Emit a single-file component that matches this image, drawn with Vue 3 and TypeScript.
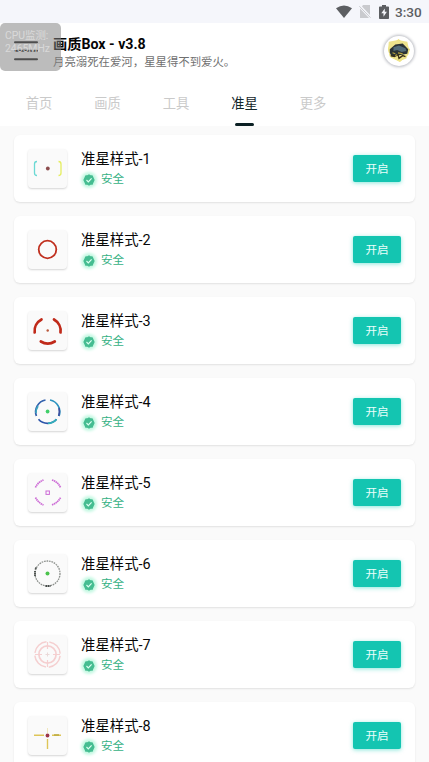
<script setup lang="ts">
import { ref } from 'vue'

const tabs = ['首页', '画质', '工具', '准星', '更多']
const active = ref(3)
const styles = [1, 2, 3, 4, 5, 6, 7, 8]
</script>

<template>
  <div class="screen">
    <div class="status">
      <svg class="wifi" viewBox="0 0 16 13"><path d="M0 3.2Q8-2.4 16 3.2L8 13Z" fill="#5c5e62" /></svg>
      <svg class="sim" viewBox="0 0 12 13">
        <path d="M4 0h7v10L3 1.500zM1 3.500 10 13H1z" fill="#c9cace" />
        <path d="M.3 1.2 11.5 12.7" stroke="#c9cace" stroke-width="1" />
      </svg>
      <svg class="battery" viewBox="0 0 10 14">
        <path d="M3 0h4v1.5h2.2q.8 0 .8.8v10.9q0 .8-.8.8H.8q-.8 0-.8-.8V2.300q0-.8.8-.8H3z" fill="#5c5e62" />
        <path d="M5.800 3.500 2.300 8.300h2.200v3.500l3.400-5H5.800z" fill="#f5f6fb" />
      </svg>
      <span class="clock">3:30</span>
    </div>

    <header class="header">
      <svg class="menu" viewBox="0 0 24 20"><path d="M1 1.300h22M1 9.800h22M1 18.300h22" stroke="#161616" stroke-width="2" stroke-linecap="round" /></svg>
      <div class="heading">
        <h1>画质Box - v3.8</h1>
        <p>月亮溺死在爱河，星星得不到爱火。</p>
      </div>
      <div class="avatar">
        <svg viewBox="0 0 26 26">
          <path d="M12.500 0 25 11l-2 6-9 8-11-6-2-9z" fill="#eee06f" />
          <path d="m2 3 10-2 10 2 2 9-3 9-8 3-9-4-3-8z" fill="#eee48c" />
          <path d="M3 11 9 6l8-1 6 6-1 5-6 1-4 1-7 1-2-4z" fill="#2b3335" />
          <path d="M7 9l6-2 7 3 1 3-5 1-5-2-4 1z" fill="#526c79" />
          <path d="M4 18l4 1 4-2 1 4 4-3 3 1" fill="none" stroke="#3a3018" stroke-width="1.500" />
          <path d="M6 15l3 1M12 15l5 1M9 18l2-1" fill="none" stroke="#bda83c" stroke-width="1.200" />
        </svg>
      </div>
      <div class="monitor">CPU监测:<br />2465MHz</div>
    </header>

    <nav class="tabs">
      <button v-for="(tab, i) in tabs" :key="tab" :class="{ active: active === i }" @click="active = i">{{ tab }}</button>
    </nav>

    <main class="list">
      <article v-for="n in styles" :key="n" class="card">
        <svg class="thumb" viewBox="0 0 39 39" fill="none">
          <g v-if="n === 1" stroke-width="1.300">
            <path d="M9 12.500q-2.500 0-2.500 2.500v9q0 2.500 2.500 2.500" stroke="#6bd9d4" />
            <path d="M30.500 12.500q2.500 0 2.500 2.500v9q0 2.500-2.500 2.500" stroke="#e5ee60" />
            <circle cx="19.800" cy="19.500" r="1.900" fill="#8c4c4d" />
          </g>
          <circle v-else-if="n === 2" cx="19.500" cy="19.500" r="8.800" stroke="#c0301f" stroke-width="1.800" />
          <g v-else-if="n === 3" stroke="#c02a1a" stroke-width="2.700" stroke-linecap="round">
            <path d="M6.700 21.500A13 13 0 0 1 13.500 8.500" />
            <path d="M26 8.500a13 13 0 0 1 6.500 13" />
            <path d="M12.800 30.500a13 13 0 0 0 14 0" />
            <circle cx="19.700" cy="19.500" r="1.200" fill="#ba593d" stroke="none" />
          </g>
          <g v-else-if="n === 4" stroke-width="1.700">
            <path d="M8.400 24A12 12 0 0 1 17.500 8" stroke="#3462ad" />
            <path d="M8 21a12 12 0 0 1 2-7" stroke="#3ba4bf" />
            <path d="M22 8a12 12 0 0 1 9 16" stroke="#2c93c0" />
            <path d="M31 16q1 4-.3 8" stroke="#3d51a0" />
            <path d="M10.500 27.300a12 12 0 0 0 18 0" stroke="#2d55aa" />
            <path d="M20 31.300q5-.3 8.500-4" stroke="#32afba" />
            <circle cx="19.600" cy="19.500" r="1.900" fill="#40cf69" />
          </g>
          <g v-else-if="n === 5" stroke="#cc6bd5" stroke-width="1.700">
            <g stroke-dasharray="1.500 .5">
              <path d="M7.500 14.500q2-5 8-7.500M24 7q6 2 8.500 7.500M7.500 24.500q2.500 5 8 7.500M24 32q6-2.500 8.500-7.500" />
            </g>
            <rect x="18" y="18" width="3.400" height="3.400" stroke-width="1" />
          </g>
          <g v-else-if="n === 6">
            <circle cx="19.500" cy="19.500" r="12.500" stroke="#8d918d" stroke-width="1.300" stroke-dasharray="1.700 .8" />
            <path d="M7 17v5M8 13.500l-.7 2M17.500 32h5" stroke="#454a48" stroke-width="1.800" stroke-dasharray="1.500 .5" />
            <circle cx="19.500" cy="19.500" r="2" fill="#4bc34c" />
          </g>
          <g v-else-if="n === 7" stroke="#f5cfd0">
            <circle cx="19.500" cy="19.500" r="12.700" stroke-width="1.500" stroke-dasharray="17 2.950" stroke-dashoffset="-1.500" />
            <circle cx="19.500" cy="19.500" r="8.600" stroke-width="1.700" />
            <path d="M19.500 7v7M19.500 25v7M7 19.500h7M25 19.500h7" stroke-width="1.200" />
            <path d="M17.500 19.500h4M19.500 17.500v4" stroke="#ead9d8" />
          </g>
          <g v-else stroke="#dec558" stroke-width="1.400">
            <path d="M6 19.300h10M24 19.300h9M19.500 23v10" />
            <path d="M19.500 12v5" stroke="#efe6bd" stroke-width="1" />
            <path d="M26 19h5" stroke="#bba83e" />
            <circle cx="19.500" cy="19.500" r="1.900" fill="#9b374a" stroke="none" />
          </g>
        </svg>
        <div class="info">
          <h2>准星样式-{{ n }}</h2>
          <div class="safe">
            <svg viewBox="0 0 12 12">
              <path d="m6 .3 1.700 1 2-.1.6 1.900L11.700 6l-1.400 2.900-.6 1.900-2-.1-1.700 1-1.700-1-2 .1-.6-1.900L.3 6l1.400-2.900.6-1.900 2 .1z" fill="#45bd91" />
              <path d="m3.500 6 1.800 1.800 3.300-3.500" fill="none" stroke="#d9fff0" stroke-width="1.200" />
            </svg>
            <span>安全</span>
          </div>
        </div>
        <button class="open">开启</button>
      </article>
    </main>
  </div>
</template>

<style>
body { margin: 0; overflow: hidden; }
</style>

<style scoped>
* { box-sizing: border-box; }
.screen {
  height: 762px;
  overflow: hidden;
  display: flex;
  flex-direction: column;
  background: #fafafa;
  font-family: Roboto, "Noto Sans CJK SC", sans-serif;
}
button { border: 0; padding: 0; font-family: inherit; }
.status {
  flex: none;
  height: 23px;
  display: flex;
  align-items: center;
  justify-content: flex-end;
  padding-right: 7px;
  background: #f5f6fb;
}
.wifi { width: 16px; height: 13px; margin-right: 7px; }
.sim { width: 12px; height: 13px; margin-right: 8px; }
.battery { width: 10px; height: 14px; margin-right: 6px; }
.clock { width: 27px; padding-top: 1px; font-size: 13.6px; font-weight: 500; line-height: 23px; color: #5c5e62; white-space: nowrap; }
.header {
  position: relative;
  flex: none;
  height: 57px;
  display: flex;
  align-items: flex-start;
  padding: 0 15px 0 14px;
  background: #fff;
}
.menu { width: 24px; height: 20px; margin-top: 18px; }
.heading { flex: 1; margin: 12px 0 0 15px; }
h1 { margin: 0; font-size: 14.2px; line-height: 18px; font-weight: 700; color: #050505; }
p { margin: 0; font-size: 11.4px; line-height: 18px; color: #707070; white-space: nowrap; }
.avatar {
  width: 30px;
  height: 30px;
  margin-top: 13px;
  padding: 3px;
  border-radius: 50%;
  background: #fff;
  box-shadow: 0 0 3px 1px #b9bbc2;
}
.avatar svg { display: block; width: 24px; height: 24px; }
.monitor {
  position: absolute;
  left: 0;
  top: 0;
  width: 61px;
  height: 48px;
  padding: 6px 0 0 5px;
  border-radius: 5px;
  background: rgba(128, 128, 128, .53);
  color: rgba(225, 225, 225, .8);
  font-size: 10.4px;
  line-height: 13px;
  white-space: nowrap;
}
.tabs { flex: none; height: 46px; display: flex; gap: 14.5px; padding-left: 12px; background: #fff; }
.tabs button {
  width: 54px;
  height: 46px;
  display: flex;
  flex-direction: column;
  align-items: center;
  background: none;
  color: #cacaca;
  font-size: 13.3px;
  line-height: 48px;
}
.tabs .active { color: #14272b; }
.tabs .active::after { content: ""; flex: none; width: 19px; height: 3px; margin-top: -5px; border-radius: 2px; background: #0b2024; }
.list { flex: none; display: flex; flex-direction: column; gap: 14px; padding: 9px 14px 0; }
.card {
  height: 67px;
  display: flex;
  align-items: center;
  padding: 0 14px;
  border-radius: 6px;
  background: #fff;
  box-shadow: 0 1px 2px rgba(0, 0, 0, .1);
}
.thumb { width: 39px; height: 39px; border-radius: 4px; background: #fafafa; box-shadow: 0 1px 2px rgba(0, 0, 0, .17); }
.info { flex: 1; margin-left: 14px; padding-top: 2px; }
h2 { margin: 0; font-size: 14.4px; line-height: 20px; font-weight: 400; color: #080808; }
.safe { display: flex; align-items: center; gap: 6px; height: 20px; padding-left: 2px; color: #36b184; font-size: 11.6px; line-height: 21px; }
.safe svg { width: 12px; height: 12px; border-radius: 50%; background: #c4f8e2; box-shadow: 0 0 3px 2px #c4f8e2; }
.open { width: 48px; height: 27px; border-radius: 2px; background: #14c5b1; box-shadow: 0 1px 4px rgba(24, 210, 185, .5); color: #eafffb; font-size: 11.6px; line-height: 28px; }
</style>
